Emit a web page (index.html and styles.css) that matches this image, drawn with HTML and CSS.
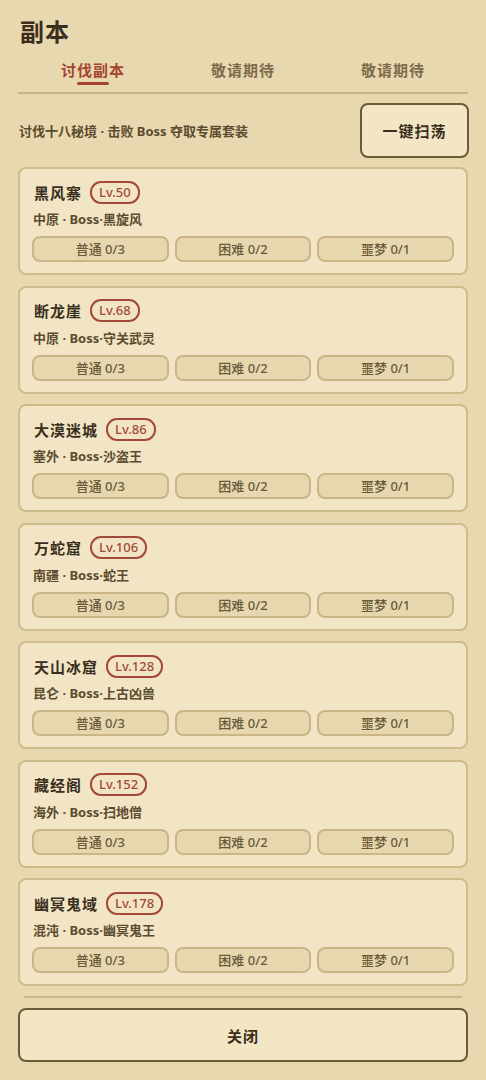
FILE: index.html
```html
<!DOCTYPE html>
<html lang="zh">
<head>
<meta charset="utf-8">
<link rel="stylesheet" href="styles.css">
</head>
<body>
<div class="page">
  <h1 class="title">副本</h1>
  <div class="tabs">
    <div class="tab active"><span>讨伐副本</span></div>
    <div class="tab"><span>敬请期待</span></div>
    <div class="tab"><span>敬请期待</span></div>
  </div>
  <div class="intro">
    <div class="intro-text">讨伐十八秘境 · 击败 Boss 夺取专属套装</div>
    <button class="btn-dark sweep">一键扫荡</button>
  </div>
  <div class="list">
    <div class="card">
      <div class="card-head"><span class="name">黑风寨</span><span class="lv">Lv.50</span></div>
      <div class="sub">中原 · Boss·黑旋风</div>
      <div class="modes"><div class="mode">普通 0/3</div><div class="mode">困难 0/2</div><div class="mode">噩梦 0/1</div></div>
    </div>
    <div class="card">
      <div class="card-head"><span class="name">断龙崖</span><span class="lv">Lv.68</span></div>
      <div class="sub">中原 · Boss·守关武灵</div>
      <div class="modes"><div class="mode">普通 0/3</div><div class="mode">困难 0/2</div><div class="mode">噩梦 0/1</div></div>
    </div>
    <div class="card">
      <div class="card-head"><span class="name">大漠迷城</span><span class="lv">Lv.86</span></div>
      <div class="sub">塞外 · Boss·沙盗王</div>
      <div class="modes"><div class="mode">普通 0/3</div><div class="mode">困难 0/2</div><div class="mode">噩梦 0/1</div></div>
    </div>
    <div class="card">
      <div class="card-head"><span class="name">万蛇窟</span><span class="lv">Lv.106</span></div>
      <div class="sub">南疆 · Boss·蛇王</div>
      <div class="modes"><div class="mode">普通 0/3</div><div class="mode">困难 0/2</div><div class="mode">噩梦 0/1</div></div>
    </div>
    <div class="card">
      <div class="card-head"><span class="name">天山冰窟</span><span class="lv">Lv.128</span></div>
      <div class="sub">昆仑 · Boss·上古凶兽</div>
      <div class="modes"><div class="mode">普通 0/3</div><div class="mode">困难 0/2</div><div class="mode">噩梦 0/1</div></div>
    </div>
    <div class="card">
      <div class="card-head"><span class="name">藏经阁</span><span class="lv">Lv.152</span></div>
      <div class="sub">海外 · Boss·扫地僧</div>
      <div class="modes"><div class="mode">普通 0/3</div><div class="mode">困难 0/2</div><div class="mode">噩梦 0/1</div></div>
    </div>
    <div class="card">
      <div class="card-head"><span class="name">幽冥鬼域</span><span class="lv">Lv.178</span></div>
      <div class="sub">混沌 · Boss·幽冥鬼王</div>
      <div class="modes"><div class="mode">普通 0/3</div><div class="mode">困难 0/2</div><div class="mode">噩梦 0/1</div></div>
    </div>
  </div>
  <div class="divider"></div>
  <button class="btn-dark close">关闭</button>
</div>
</body>
</html>
```

FILE: styles.css
```css
* { box-sizing: border-box; }
html, body { margin: 0; padding: 0; }
body {
  background: #e8d8b0;
  font-family: "Noto Sans", "Noto Sans CJK SC", sans-serif;
  color: #3b2f1d;
  width: 486px;
  height: 1080px;
  overflow: hidden;
}
.page {
  padding: 15px 18px 0 18px;
  display: flex;
  flex-direction: column;
}
.title {
  margin: 0 0 0 2px;
  font-size: 24px;
  font-weight: 700;
  line-height: 34px;
  color: #3a2e1c;
  letter-spacing: 1px;
}
.tabs {
  display: flex;
  margin-top: 5px;
  border-bottom: 2px solid #c7b487;
  height: 40px;
}
.tab {
  flex: 1;
  display: flex;
  justify-content: center;
  font-size: 15px;
  font-weight: 700;
  color: #7d6c4c;
  letter-spacing: 1px;
}
.tab span {
  display: block;
  height: 31px;
  padding-top: 2px;
  line-height: 28px;
  position: relative;
}
.tab.active { color: #a4442f; }
.tab.active span::after {
  content: "";
  position: absolute;
  left: 50%;
  transform: translateX(-50%);
  bottom: 0;
  width: 32px;
  height: 3px;
  background: #a4442f;
  border-radius: 2px;
}
.intro {
  display: flex;
  align-items: center;
  justify-content: space-between;
  margin-top: 9px;
  height: 55px;
}
.intro-text {
  font-size: 13px;
  font-weight: 700;
  color: #5c4b2e;
  padding-left: 1px;
}
.btn-dark {
  background: #f3e6c5;
  border: 2px solid #6b5a37;
  border-radius: 8px;
  font-family: "Noto Sans", "Noto Sans CJK SC", sans-serif;
  font-size: 15px;
  font-weight: 700;
  color: #3a2e1c;
  letter-spacing: 1px;
  padding: 0;
}
.sweep {
  width: 109px;
  height: 55px;
  margin-right: -1px;
}
.list {
  margin-top: 9px;
  display: flex;
  flex-direction: column;
  gap: 10.5px;
}
.card {
  background: #f1e5c5;
  border: 2px solid #cfbc8c;
  border-radius: 8px;
  padding: 12px 12px 11px 12px;
  height: 108px;
}
.card-head {
  display: flex;
  align-items: center;
  height: 22px;
}
.name {
  font-size: 15px;
  font-weight: 700;
  color: #3a2e1c;
  margin-left: 2px;
  letter-spacing: 1px;
}
.lv {
  margin-left: 8px;
  border: 2px solid #a3493a;
  border-radius: 11px;
  color: #a3493a;
  font-size: 13px;
  font-weight: 500;
  height: 23px;
  line-height: 19px;
  padding: 0 7px;
}
.sub {
  margin-top: 6px;
  font-size: 13px;
  font-weight: 700;
  color: #5c4b2e;
  line-height: 20px;
  margin-left: 1px;
}
.modes {
  margin-top: 7px;
  display: grid;
  grid-template-columns: 1fr 1fr 1fr;
  gap: 6px;
}
.mode {
  height: 26px;
  background: #e7d7ae;
  border: 2px solid #c9b585;
  border-radius: 8px;
  text-align: center;
  line-height: 22px;
  font-size: 13px;
  font-weight: 500;
  color: #6a5a3b;
}
.divider {
  margin: 10px 6px 0 6px;
  height: 2px;
  background: #c9b68a;
}
.close {
  margin-top: 10px;
  height: 54px;
  width: 450px;
}
```
